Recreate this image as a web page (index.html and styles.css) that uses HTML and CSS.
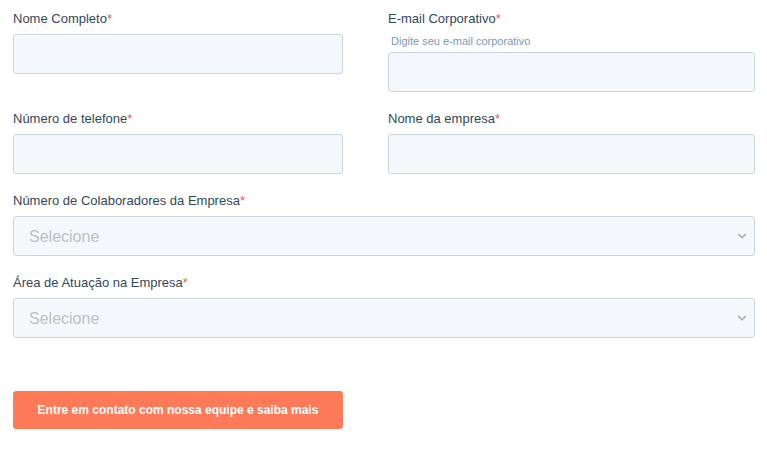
FILE: index.html
```html
<!DOCTYPE html>
<html lang="pt-BR">
<head>
<meta charset="utf-8">
<title>Formulário</title>
<link rel="stylesheet" href="styles.css">
</head>
<body>
<form class="form">
  <div class="row two">
    <div class="field">
      <label class="label">Nome Completo<span class="req">*</span></label>
      <input class="input" type="text">
    </div>
    <div class="field">
      <label class="label">E-mail Corporativo<span class="req">*</span></label>
      <div class="help">Digite seu e-mail corporativo</div>
      <input class="input" type="email">
    </div>
  </div>
  <div class="row two">
    <div class="field">
      <label class="label">Número de telefone<span class="req">*</span></label>
      <input class="input" type="tel">
    </div>
    <div class="field">
      <label class="label">Nome da empresa<span class="req">*</span></label>
      <input class="input" type="text">
    </div>
  </div>
  <div class="row">
    <div class="field">
      <label class="label">Número de Colaboradores da Empresa<span class="req">*</span></label>
      <div class="select-wrap">
        <select class="select"><option>Selecione</option></select>
        <svg class="chev" width="10" height="6" viewBox="0 0 10 6"><path d="M1.2 1.2 L5 4.6 L8.8 1.2" fill="none" stroke="#b0b0b0" stroke-width="1.8"/></svg>
      </div>
    </div>
  </div>
  <div class="row">
    <div class="field">
      <label class="label">Área de Atuação na Empresa<span class="req">*</span></label>
      <div class="select-wrap">
        <select class="select"><option>Selecione</option></select>
        <svg class="chev" width="10" height="6" viewBox="0 0 10 6"><path d="M1.2 1.2 L5 4.6 L8.8 1.2" fill="none" stroke="#b0b0b0" stroke-width="1.8"/></svg>
      </div>
    </div>
  </div>
  <div class="actions">
    <button class="btn" type="button">Entre em contato com nossa equipe e saiba mais</button>
  </div>
</form>
</body>
</html>
```
FILE: styles.css
```css
html, body {
  margin: 0;
  padding: 0;
  background: #ffffff;
}
body {
  font-family: "Liberation Sans", Arial, Helvetica, sans-serif;
  color: #33475b;
}
.form {
  width: 742px;
  padding: 9px 12px 0 13px;
  display: flex;
  flex-direction: column;
  gap: 17px;
}
.row.two {
  display: grid;
  grid-template-columns: 330px 367px;
  column-gap: 45px;
  align-items: start;
}
.field {
  display: flex;
  flex-direction: column;
}
.label {
  font-size: 13px;
  line-height: 20px;
  margin-bottom: 5px;
  color: #33475b;
}
.req {
  color: #f2545b;
}
.help {
  font-size: 11px;
  line-height: 14px;
  color: #7c98b6;
  padding-left: 3px;
  margin-bottom: 4px;
}
.input, .select {
  box-sizing: border-box;
  height: 40px;
  width: 100%;
  background: #f5f8fa;
  border: 1px solid #cbd6e2;
  border-radius: 3px;
  margin: 0;
  outline: none;
}
.select-wrap {
  position: relative;
}
.select {
  appearance: none;
  -webkit-appearance: none;
  font-family: "Liberation Sans", Arial, sans-serif;
  font-size: 16px;
  color: #c0c0c0;
  padding: 0 15px;
}
.chev {
  position: absolute;
  right: 8px;
  top: 17px;
}
.actions {
  margin-top: 36px;
}
.btn {
  box-sizing: border-box;
  width: 330px;
  height: 38px;
  background: #ff7a59;
  border: 1px solid #ff7a59;
  border-radius: 3px;
  color: #ffffff;
  font-family: "Liberation Sans", Arial, sans-serif;
  font-weight: bold;
  font-size: 12px;
  padding: 0;
}
```
